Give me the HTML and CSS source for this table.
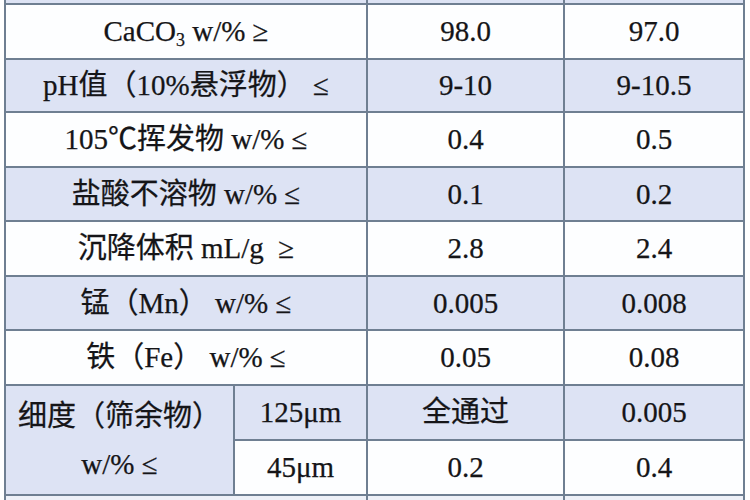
FILE: index.html
```html
<!DOCTYPE html>
<html lang="zh-CN">
<head>
<meta charset="utf-8">
<title>轻质碳酸钙指标</title>
<link rel="stylesheet" href="styles.css">
</head>
<body>
<table class="spec">
  <colgroup>
    <col class="c1"><col class="c2"><col class="c3"><col class="c4">
  </colgroup>
  <tbody>
    <tr class="cut blue"><td colspan="2"></td><td></td><td></td></tr>
    <tr class="white r55"><td colspan="2">CaCO<sub>3</sub> w/% ≥</td><td>98.0</td><td>97.0</td></tr>
    <tr class="blue r53"><td colspan="2">pH值（10%悬浮物） ≤</td><td>9-10</td><td>9-10.5</td></tr>
    <tr class="white r55"><td colspan="2">105℃挥发物 w/% ≤</td><td>0.4</td><td>0.5</td></tr>
    <tr class="blue r54"><td colspan="2">盐酸不溶物 w/% ≤</td><td>0.1</td><td>0.2</td></tr>
    <tr class="white r55"><td colspan="2">沉降体积 mL/g&nbsp; ≥</td><td>2.8</td><td>2.4</td></tr>
    <tr class="blue r54"><td colspan="2">锰（Mn） w/% ≤</td><td>0.005</td><td>0.008</td></tr>
    <tr class="white r55"><td colspan="2">铁（Fe） w/% ≤</td><td>0.05</td><td>0.08</td></tr>
    <tr class="blue r55"><td rowspan="2" class="merged">细度（筛余物）<br>w/% ≤</td><td>125μm</td><td>全通过</td><td>0.005</td></tr>
    <tr class="white r55"><td>45μm</td><td>0.2</td><td>0.4</td></tr>
    <tr class="pale r55"><td colspan="2"></td><td></td><td></td></tr>
  </tbody>
</table>
</body>
</html>
```

FILE: styles.css
```css
html, body {
  margin: 0;
  padding: 0;
  background: #ffffff;
  overflow: hidden;
}

.spec {
  margin-left: 4px;
  width: 741px;
  table-layout: fixed;
  border-collapse: collapse;
  font-family: "Liberation Serif", "Noto Sans CJK SC", serif;
  font-size: 29px;
  color: #151518;
  -webkit-text-stroke: 0.25px #151518;
  border-left: 2px solid #7a8594;
  border-right: 2px solid #7a8594;
}

.c1 { width: 229px; }
.c2 { width: 133px; }
.c3 { width: 197px; }
.c4 { width: 180px; }

.spec td {
  border: 2px solid #6f7f92;
  padding: 0;
  text-align: center;
  vertical-align: middle;
  line-height: 1;
  white-space: nowrap;
}

.spec tr.cut td {
  border-top: none;
  height: 3px;
}

.white td { background: #fdfeff; }
.blue td { background: #dde3f4; }
.pale td { background: #eef1f8; }

.r53 td { height: 51px; }
.r54 td { height: 52px; }
.r55 td { height: 53px; }

.spec td.merged {
  background: #dde3f4;
  line-height: 48px;
}

.spec sub {
  font-size: 0.62em;
  line-height: 0;
  vertical-align: -0.28em;
}
```
